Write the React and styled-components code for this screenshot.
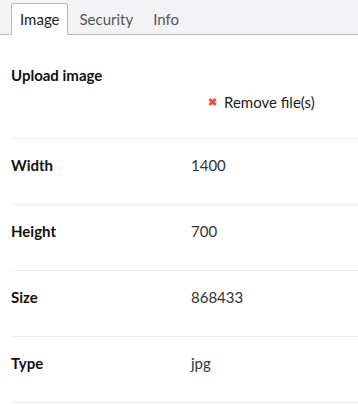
import React from "react";
import styled, { createGlobalStyle } from "styled-components";

const GlobalStyle = createGlobalStyle`
  body {
    margin: 0;
    background: #fff;
    font-family: Lato, "Noto Sans", sans-serif;
  }
`;

const TabBar = styled.div`
  display: flex;
  align-items: flex-end;
  height: 34px;
  padding-left: 11px;
  background-color: #f3f3f5;
  border-bottom: 1px solid #b8b8c0;
`;

const Tab = styled.div`
  height: 30px;
  line-height: 30px;
  padding: 0 8px;
  margin-bottom: -1px;
  font-size: 15px;
  color: ${(p) => (p.active ? "#1b1b1b" : "#555")};
  background-color: ${(p) => (p.active ? "#fff" : "transparent")};
  border: 1px solid ${(p) => (p.active ? "#b8b8c0" : "transparent")};
  border-bottom-color: ${(p) => (p.active ? "#fff" : "transparent")};
  border-radius: 3px 3px 0 0;
  margin-right: 2px;
`;

const Content = styled.div`
  padding: 14px 0 0 11px;
`;

const Row = styled.div`
  display: grid;
  grid-template-columns: 180px 1fr;
  row-gap: 7px;
  padding: 16px 0 ${(p) => (p.upload ? "26px" : "29px")};
  border-bottom: 1px solid #ececee;
  line-height: 20px;
  font-size: 15px;
`;

const Label = styled.div`
  font-weight: bold;
  color: #111;
`;

const Value = styled.div`
  color: #333;
`;

const RemoveButton = styled.div`
  grid-column: 2;
  display: flex;
  align-items: center;
  gap: 7px;
  padding-left: 17px;
  color: #1b1b1b;
`;

const Cross = styled.span`
  color: #f04848;
  font-size: 11px;
  font-weight: bold;
`;

const fields = [
  ["Width", "1400"],
  ["Height", "700"],
  ["Size", "868433"],
  ["Type", "jpg"],
];

export default function App() {
  return (
    <>
      <GlobalStyle />
      <TabBar>
        <Tab active>Image</Tab>
        <Tab>Security</Tab>
        <Tab>Info</Tab>
      </TabBar>
      <Content>
        <Row upload>
          <Label>Upload image</Label>
          <div />
          <RemoveButton>
            <Cross>✖</Cross>
            Remove file(s)
          </RemoveButton>
        </Row>
        {fields.map(([k, v]) => (
          <Row key={k}>
            <Label>{k}</Label>
            <Value>{v}</Value>
          </Row>
        ))}
      </Content>
    </>
  );
}
